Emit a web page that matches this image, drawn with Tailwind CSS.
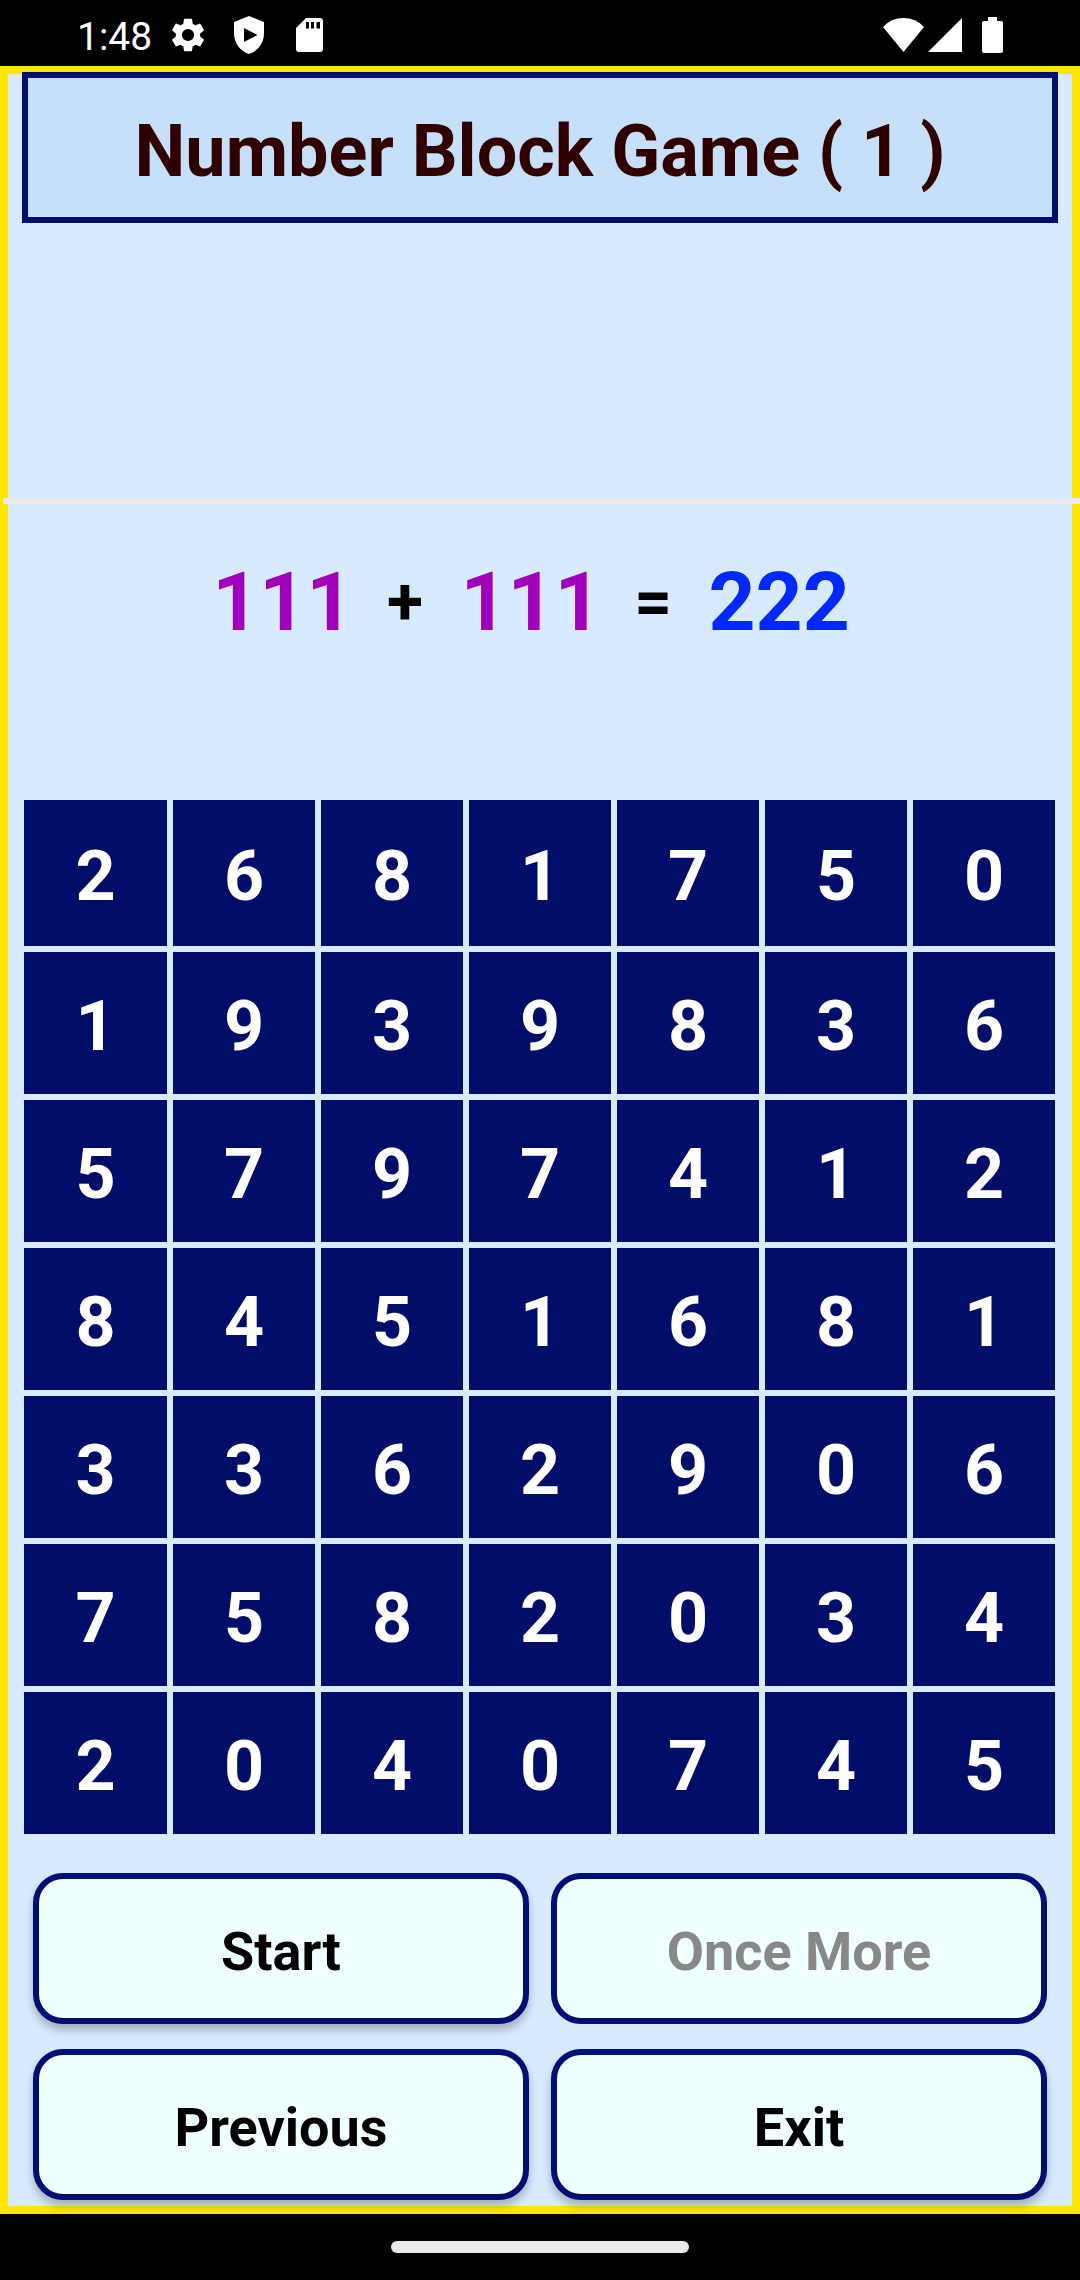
<!DOCTYPE html>
<html lang="en">
<head>
<meta charset="utf-8">
<meta name="viewport" content="width=device-width, initial-scale=1">
<title>Number Block Game</title>
<script src="https://cdn.jsdelivr.net/npm/@tailwindcss/browser@4"></script>
</head>
<body class="flex min-h-screen flex-col bg-black font-[Roboto,sans-serif] text-black">
  <header class="flex h-[66px] items-center justify-between pt-1 pr-[77px] pl-[77px] text-white">
    <div class="flex items-center">
      <time class="w-[94px] pt-1 text-[39px] leading-none">1:48</time>
      <svg class="h-[34px] w-[34px]" viewBox="2 2 20 20" fill="currentColor" aria-hidden="true"><path d="M19.14 12.94c.04-.3.06-.61.06-.94 0-.32-.02-.64-.07-.94l2.03-1.58a.49.49 0 0 0 .12-.61l-1.92-3.32a.488.488 0 0 0-.59-.22l-2.39.96c-.5-.38-1.03-.7-1.62-.94l-.36-2.54a.484.484 0 0 0-.48-.41h-3.84c-.24 0-.43.17-.47.41l-.36 2.54c-.59.24-1.13.57-1.62.94l-2.39-.96c-.22-.08-.47 0-.59.22L2.74 8.87c-.12.21-.08.47.12.61l2.03 1.58c-.05.3-.09.63-.09.94s.02.64.07.94l-2.03 1.58a.49.49 0 0 0-.12.61l1.92 3.32c.12.22.37.29.59.22l2.39-.96c.5.38 1.03.7 1.62.94l.36 2.54c.05.24.24.41.48.41h3.84c.24 0 .44-.17.47-.41l.36-2.54c.59-.24 1.13-.56 1.62-.94l2.39.96c.22.08.47 0 .59-.22l1.92-3.32c.12-.22.07-.47-.12-.61l-2.01-1.58zM12 15.6A3.6 3.6 0 1 1 12 8.400a3.6 3.6 0 0 1 0 7.200z"/></svg>
      <svg class="ml-7 h-[38px] w-[32px]" viewBox="0 0 32 38" fill="currentColor" aria-hidden="true"><path fill-rule="evenodd" d="M16 0 31 6V17C31 27 25 35 16 38 7 35 1 27 1 17V6ZM11 12V26L24.500 19Z"/></svg>
      <svg class="ml-[31px] h-[34px] w-[27px]" viewBox="0 0 27 34" fill="currentColor" aria-hidden="true"><path fill-rule="evenodd" d="M10 0H24Q27 0 27 3V31Q27 34 24 34H3Q0 34 0 31V10ZM10 4V10.500H13V4ZM15 4V10.500H18V4ZM20.500 4V10.500H24V4Z"/></svg>
    </div>
    <div class="flex items-center">
      <svg class="h-[34px] w-[41px]" viewBox="0 0 41 34" fill="currentColor" aria-hidden="true"><path d="M0 9Q8 0 20.500 0T41 9L20.500 34Z"/></svg>
      <svg class="ml-1 h-[34px] w-[34px]" viewBox="0 0 34 34" fill="currentColor" aria-hidden="true"><path d="M34 0V34H0Z"/></svg>
      <svg class="ml-5 h-[36px] w-[21px]" viewBox="0 0 21 36" fill="currentColor" aria-hidden="true"><path d="M6 0H15V4H19Q21 4 21 6V34Q21 36 19 36H2Q0 36 0 34V6Q0 4 2 4H6Z"/></svg>
    </div>
  </header>

  <main class="flex flex-1 flex-col bg-[#d7eaff] pt-[6px] shadow-[inset_0_0_0_8px_#ffe600]">
    <h1 class="mx-[22px] flex h-[151px] items-center justify-center border-6 border-[#000f6e] bg-[#c5e0f8] pt-2 text-[72px] leading-none font-bold text-[#300000]">Number Block Game ( 1 )</h1>

    <hr class="mt-[275px] ml-[3px] h-[6px] border-0 bg-[#ebebeb]">

    <section class="flex h-[296px] justify-center pt-[50px] pr-[18px] text-[82px] leading-[96px] font-bold text-[#a000b9]" aria-label="Equation">
      <span>111</span>
      <span class="w-[107px] pr-1 text-center text-[66px] leading-[96px] text-black">+</span>
      <span>111</span>
      <span class="w-[107px] pr-1 text-center text-[66px] leading-[96px] text-black">=</span>
      <span class="text-[#0028ff]">222</span>
    </section>

    <section id="board" class="mr-[25px] ml-6 grid auto-rows-[142px] grid-cols-[143px_repeat(6,minmax(0,1fr))] grid-rows-[146px] gap-[6px] text-[70px] leading-none font-bold text-white" aria-label="Number board"></section>

    <section class="grid auto-rows-[151px] grid-cols-2 gap-x-[22px] gap-y-[25px] px-[33px] pt-[39px] pb-[14px] text-[54px] leading-none font-bold" aria-label="Game controls">
      <button type="button" class="rounded-[30px] border-6 border-[#000f73] bg-[#f0ffff] pt-[6px] shadow-[0_6px_9px_rgba(0,0,0,0.25)]">Start</button>
      <button type="button" disabled class="rounded-[30px] border-6 border-[#000f73] bg-[#f0ffff] pt-[6px] text-[#888888]">Once More</button>
      <button type="button" class="rounded-[30px] border-6 border-[#000f73] bg-[#f0ffff] pt-[6px] shadow-[0_6px_9px_rgba(0,0,0,0.25)]">Previous</button>
      <button type="button" class="rounded-[30px] border-6 border-[#000f73] bg-[#f0ffff] pt-[6px] shadow-[0_6px_9px_rgba(0,0,0,0.25)]">Exit</button>
    </section>
  </main>

  <footer class="relative flex h-[66px] justify-center bg-black pt-[27px]">
    <div class="h-3 w-[298px] rounded-full bg-[#ebe9eb]"></div>
  </footer>

  <script>
    const rows = ["2681750", "1939836", "5797412", "8451681", "3362906", "7582034", "2040745"];
    const board = document.getElementById("board");
    for (const digit of rows.join("")) {
      const cell = document.createElement("button");
      cell.type = "button";
      cell.className = "bg-[#000d69] pt-[6px]";
      cell.textContent = digit;
      board.append(cell);
    }
  </script>
</body>
</html>
